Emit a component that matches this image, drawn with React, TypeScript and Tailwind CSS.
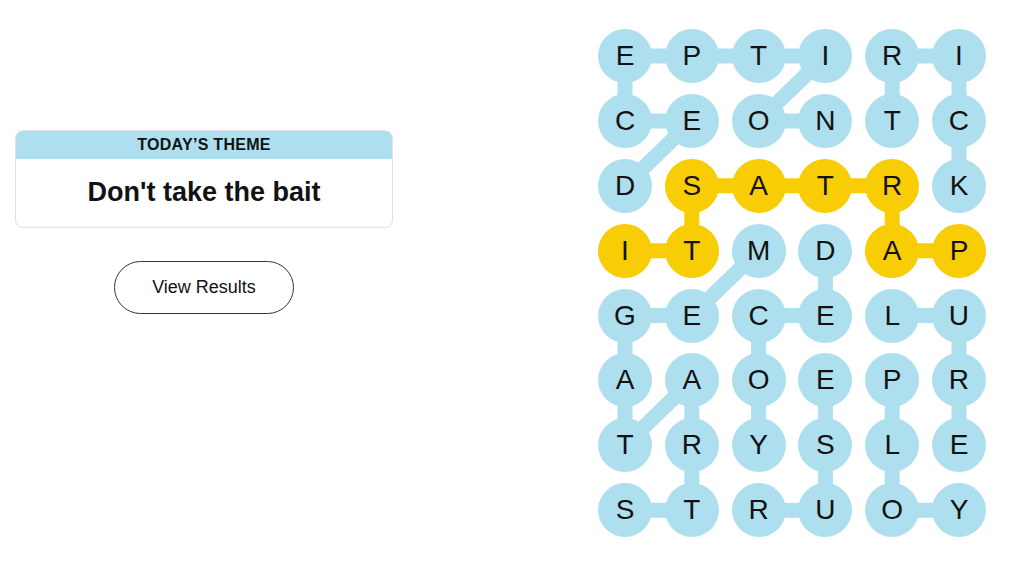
import React from "react";

const LETTERS = [
  "EPTIRI",
  "CEONTC",
  "DSATRK",
  "ITMDAP",
  "GECELU",
  "AAOEPR",
  "TRYSLE",
  "STRUOY",
];

const YELLOW = new Set(["2,1", "2,2", "2,3", "2,4", "3,0", "3,1", "3,4", "3,5"]);

type Edge = [number, number, number, number];

const BLUE_EDGES: Edge[] = [
  [0, 0, 0, 1],
  [0, 1, 0, 2],
  [0, 2, 0, 3],
  [0, 3, 1, 2],
  [0, 4, 0, 5],
  [0, 4, 1, 4],
  [0, 5, 1, 5],
  [0, 0, 1, 0],
  [1, 0, 1, 1],
  [1, 1, 2, 0],
  [1, 2, 1, 3],
  [1, 5, 2, 5],
  [3, 2, 4, 1],
  [3, 3, 4, 3],
  [4, 0, 4, 1],
  [4, 2, 4, 3],
  [4, 4, 4, 5],
  [4, 0, 5, 0],
  [4, 2, 5, 2],
  [4, 5, 5, 5],
  [5, 0, 6, 0],
  [5, 1, 6, 0],
  [5, 1, 6, 1],
  [5, 2, 6, 2],
  [5, 3, 6, 3],
  [5, 4, 6, 4],
  [5, 5, 6, 5],
  [6, 1, 7, 1],
  [6, 3, 7, 3],
  [6, 4, 7, 4],
  [7, 0, 7, 1],
  [7, 2, 7, 3],
  [7, 4, 7, 5],
];

const YELLOW_EDGES: Edge[] = [
  [2, 1, 2, 2],
  [2, 2, 2, 3],
  [2, 3, 2, 4],
  [2, 1, 3, 1],
  [3, 0, 3, 1],
  [2, 4, 3, 4],
  [3, 4, 3, 5],
];

const D = 54;
const SX = 66.8;
const SY = 64.9;
const cx = (c: number) => D / 2 + SX * c;
const cy = (r: number) => D / 2 + SY * r;

export default function App() {
  const W = D + SX * 5;
  const H = D + SY * 7;
  return (
    <div
      className="w-[1024px] h-[576px] bg-white flex overflow-hidden"
      style={{ fontFamily: '"Liberation Sans", Arial, sans-serif' }}
    >
      <div className="w-[378px] ml-[15px] mt-[130px] flex flex-col items-center">
        <div className="w-full rounded-[8px] border border-[#e2e2e2] overflow-hidden">
          <div className="h-[28px] bg-[#aedfee] flex items-center justify-center text-[16px] font-bold tracking-[0.3px] text-[#121212]">
            TODAY’S THEME
          </div>
          <div className="h-[68px] flex items-center justify-center text-[27px] font-bold text-[#121212] pb-[2px]">
            Don't take the bait
          </div>
        </div>
        <div className="mt-[33px] w-[180px] h-[53px] rounded-full border border-[#333] flex items-center justify-center text-[18px] text-[#121212]">
          View Results
        </div>
      </div>
      <div className="ml-[205px] mt-[29px] relative" style={{ width: W, height: H }}>
        <svg className="absolute inset-0" width={W} height={H} viewBox={`0 0 ${W} ${H}`}>
          {BLUE_EDGES.map(([r1, c1, r2, c2], i) => (
            <line key={"b" + i} x1={cx(c1)} y1={cy(r1)} x2={cx(c2)} y2={cy(r2)} stroke="#aedfee" strokeWidth={15} />
          ))}
          {YELLOW_EDGES.map(([r1, c1, r2, c2], i) => (
            <line key={"y" + i} x1={cx(c1)} y1={cy(r1)} x2={cx(c2)} y2={cy(r2)} stroke="#f8cd05" strokeWidth={15} />
          ))}
        </svg>
        <div className="relative grid grid-cols-[repeat(6,54px)] grid-rows-[repeat(8,54px)] gap-x-[12.8px] gap-y-[10.9px]">
          {LETTERS.map((row, r) =>
            row.split("").map((ch, c) => (
              <div
                key={r + "-" + c}
                className={
                  "w-[54px] h-[54px] rounded-full flex items-center justify-center text-[28px] text-[#121212] " +
                  (YELLOW.has(r + "," + c) ? "bg-[#f8cd05]" : "bg-[#aedfee]")
                }
              >
                {ch}
              </div>
            ))
          )}
        </div>
      </div>
    </div>
  );
}
